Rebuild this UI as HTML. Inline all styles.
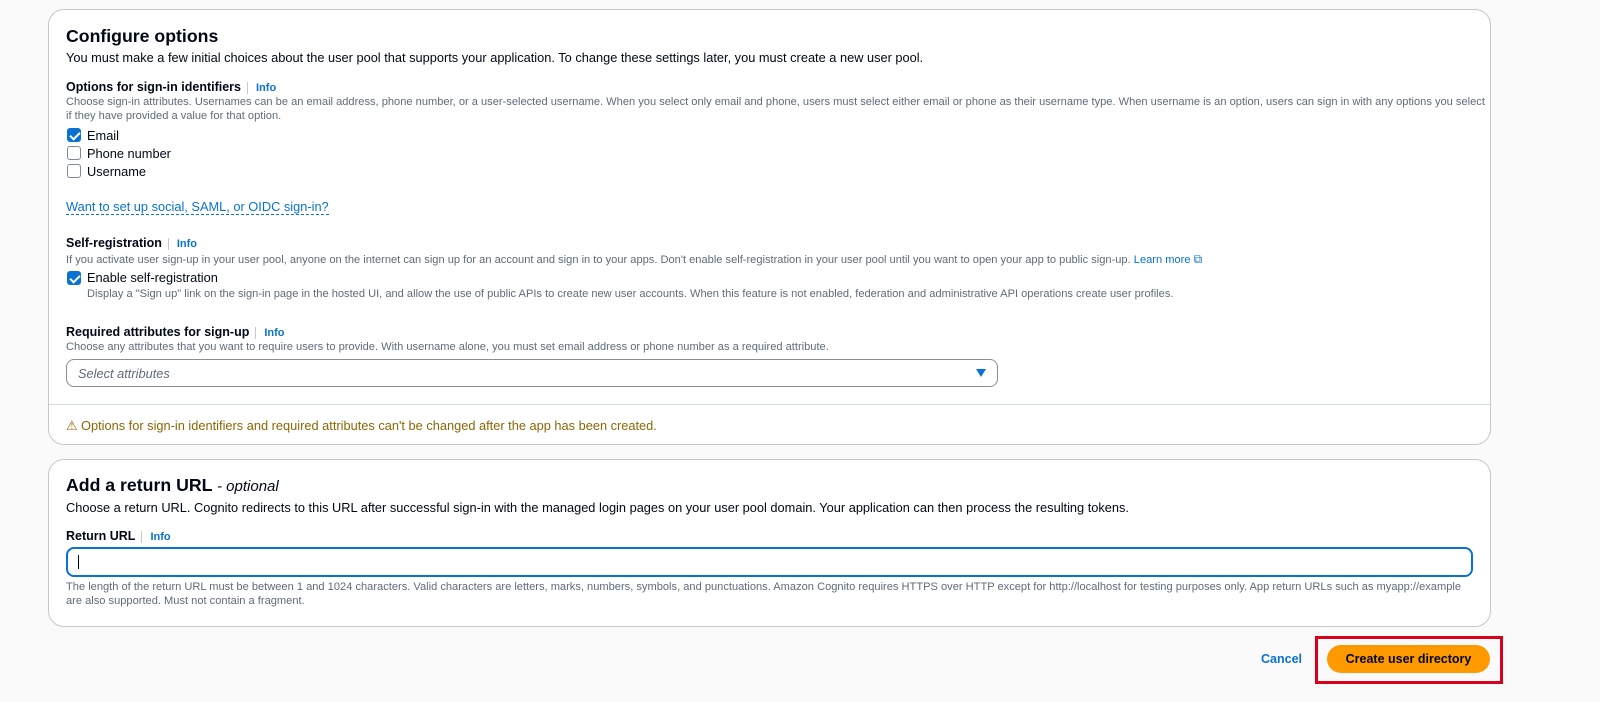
<!DOCTYPE html>
<html><head><style>
*{margin:0;padding:0;box-sizing:border-box}
body{width:1600px;height:702px;background:#fafafa;font-family:"Liberation Sans",Arial,sans-serif;color:#000716;position:relative;overflow:hidden}
.p{position:absolute;left:48px;width:1443px;background:#fff;border:1px solid #c6c6cd;border-radius:16px}
.a{position:absolute;white-space:nowrap}
h2{font-size:17.7px;font-weight:bold}
.d{font-size:12.8px;color:#000716}
.s{font-size:11.1px;color:#5f6b7a}
.l{font-size:12.5px;font-weight:bold}
.info{font-size:11px;font-weight:bold;color:#0972d3;border-left:1px solid #c6c6cd;padding-left:8px;margin-left:6px}
.cb{position:absolute;width:14px;height:14px;border:1.5px solid #7d8998;border-radius:3px;background:#fff}
.cb.on{background:#0972d3;border-color:#0972d3}
.cb.on::after{content:"";position:absolute;left:3.5px;top:0.5px;width:4px;height:8px;border:solid #fff;border-width:0 2px 2px 0;transform:rotate(45deg)}
.lk{color:#0972d3}
</style></head><body>
<div class="p" style="top:9px;height:436px">
 <div class="a" style="left:17px;top:16px"><h2>Configure options</h2></div>
 <div class="a d" style="left:17px;top:40px">You must make a few initial choices about the user pool that supports your application. To change these settings later, you must create a new user pool.</div>
 <div class="a l" style="left:17px;top:70px">Options for sign-in identifiers<span class="info">Info</span></div>
 <div class="a s" style="left:17px;top:86px">Choose sign-in attributes. Usernames can be an email address, phone number, or a user-selected username. When you select only email and phone, users must select either email or phone as their username type. When username is an option, users can sign in with any options you select</div>
 <div class="a s" style="left:17px;top:100px">if they have provided a value for that option.</div>
 <div class="cb on" style="left:18px;top:118px"></div><div class="a d" style="left:38px;top:118px">Email</div>
 <div class="cb" style="left:18px;top:136px"></div><div class="a d" style="left:38px;top:136px">Phone number</div>
 <div class="cb" style="left:18px;top:154px"></div><div class="a d" style="left:38px;top:154px">Username</div>
 <div class="a d lk" style="left:17px;top:189px;border-bottom:1px dashed #0972d3">Want to set up social, SAML, or OIDC sign-in?</div>
 <div class="a l" style="left:17px;top:226px">Self-registration<span class="info">Info</span></div>
 <div class="a s" style="left:17px;top:242px">If you activate user sign-up in your user pool, anyone on the internet can sign up for an account and sign in to your apps. Don't enable self-registration in your user pool until you want to open your app to public sign-up. <span class="lk">Learn more</span> <span class="lk" style="font-size:12px">⧉</span></div>
 <div class="cb on" style="left:18px;top:261px"></div><div class="a d" style="left:38px;top:260px">Enable self-registration</div>
 <div class="a s" style="left:38px;top:278px">Display a "Sign up" link on the sign-in page in the hosted UI, and allow the use of public APIs to create new user accounts. When this feature is not enabled, federation and administrative API operations create user profiles.</div>
 <div class="a l" style="left:17px;top:315px">Required attributes for sign-up<span class="info">Info</span></div>
 <div class="a s" style="left:17px;top:331px">Choose any attributes that you want to require users to provide. With username alone, you must set email address or phone number as a required attribute.</div>
 <div class="a" style="left:17px;top:349px;width:932px;height:28px;border:1px solid #8c8c94;border-radius:8px"><span class="a d" style="left:11px;top:6px;font-style:italic;color:#5f6b7a">Select attributes</span><span class="a" style="right:11px;top:9px;width:0;height:0;border-left:5px solid transparent;border-right:5px solid transparent;border-top:8px solid #0972d3"></span></div>
 <div class="a" style="left:0;top:394px;width:1441px;border-top:1px solid #d5dbdb"></div>
 <div class="a d" style="left:17px;top:408px;color:#8d6605">⚠ Options for sign-in identifiers and required attributes can't be changed after the app has been created.</div>
</div>
<div class="p" style="top:459px;height:168px">
 <div class="a" style="left:17px;top:15px"><h2>Add a return URL <span style="font-weight:normal;font-style:italic;font-size:15px">- optional</span></h2></div>
 <div class="a d" style="left:17px;top:40px">Choose a return URL. Cognito redirects to this URL after successful sign-in with the managed login pages on your user pool domain. Your application can then process the resulting tokens.</div>
 <div class="a l" style="left:17px;top:69px">Return URL<span class="info">Info</span></div>
 <div class="a" style="left:17px;top:87px;width:1407px;height:30px;border:2px solid #0972d3;border-radius:8px"><span class="a" style="left:10px;top:6px;width:1px;height:14px;background:#000"></span></div>
 <div class="a s" style="left:17px;top:121px">The length of the return URL must be between 1 and 1024 characters. Valid characters are letters, marks, numbers, symbols, and punctuations. Amazon Cognito requires HTTPS over HTTP except for http://localhost for testing purposes only. App return URLs such as myapp://example</div>
 <div class="a s" style="left:17px;top:135px">are also supported. Must not contain a fragment.</div>
</div>
<div class="a" style="left:1261px;top:652px;font-size:12.5px;font-weight:bold;color:#0972d3">Cancel</div>
<div class="a" style="left:1315px;top:636px;width:188px;height:48px;border:3px solid #d9001b"></div>
<div class="a" style="left:1327px;top:645px;width:163px;height:28px;background:#ff9900;border-radius:14px;font-size:12.5px;font-weight:bold;text-align:center;line-height:28px">Create user directory</div>
</body></html>
